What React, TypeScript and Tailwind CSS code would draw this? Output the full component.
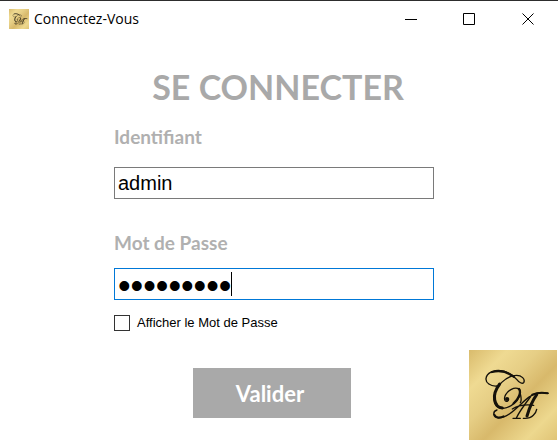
import { useState } from "react";

function Monogram({ className, id }: { className: string; id: string }) {
  return (
    <svg viewBox="0 0 264 270" preserveAspectRatio="none" className={className} role="img" aria-label="CA">
      <defs>
        <linearGradient id={id} x1="0" y1="0" x2="1" y2="1">
          <stop offset="0" stopColor="#d9bb6c" />
          <stop offset="0.22" stopColor="#efda92" />
          <stop offset="0.4" stopColor="#e6ce85" />
          <stop offset="0.58" stopColor="#d8b96b" />
          <stop offset="0.82" stopColor="#edd88e" />
          <stop offset="1" stopColor="#e0c476" />
        </linearGradient>
      </defs>
      <rect width="264" height="270" fill={`url(#${id})`} />
      <g fill="none" stroke="#15120b" strokeLinecap="round" strokeLinejoin="round">
        <path strokeWidth="4" d="M84 108C64 110 50 98 51 86C53 68 74 60 95 62C116 64 132 76 143 88C150 97 160 103 164 98C170 87 157 76 143 76C112 76 77 110 75 143C73 164 85 176 103 175C130 173 154 145 154 126C154 114 140 111 127 118C112 126 103 141 108 151C112 158 121 153 118 145" />
        <path strokeWidth="9" d="M92 102C80 118 74 133 77 149C80 165 88 173 100 174" />
        <path strokeWidth="7" d="M69 66C92 59 114 65 134 80M150 117C158 127 148 149 134 160" />
        <circle cx="114" cy="147" r="6" fill="#15120b" stroke="none" />
        <path strokeWidth="4" d="M84 180C70 184 71 204 89 204C122 204 155 158 182 140C200 127 217 126 237 130M130 177C148 166 172 163 194 166" />
        <path strokeWidth="6" d="M76 194C80 204 92 205 104 199M190 134C208 126 222 127 236 130" />
        <path strokeWidth="9" d="M203 134C189 154 180 177 174 198" />
        <path strokeWidth="4" d="M163 205C175 206 186 203 193 196C199 190 202 184 203 178M132 205L154 205M154 132C157 145 159 151 154 158M184 141C168 162 152 183 142 204" />
      </g>
    </svg>
  );
}

export default function App() {
  const [login, setLogin] = useState("admin");
  const [password, setPassword] = useState("motpasse1");
  const [visible, setVisible] = useState(false);

  return (
    <div className="relative min-h-screen border-t border-[#2d2d2d] bg-white font-['Lato',sans-serif]">
      <header className="flex h-9 items-center pl-[9px]">
        <Monogram id="gold-small" className="size-5" />
        <h1 className="ml-[5px] grow font-['Open_Sans',sans-serif] text-sm text-black">Connectez-Vous</h1>
        <button type="button" aria-label="Réduire" className="flex h-9 w-[58px] items-center justify-center">
          <svg className="size-3" viewBox="0 0 12 12" shapeRendering="crispEdges"><path d="M0 6.5H12" stroke="black" /></svg>
        </button>
        <button type="button" aria-label="Agrandir" className="flex h-9 w-[58px] items-center justify-center">
          <svg className="size-3" viewBox="0 0 12 12" fill="none"><path d="M.5.5H11.5V11.5H.5Z" stroke="black" /></svg>
        </button>
        <button type="button" aria-label="Fermer" className="flex h-9 w-[60px] items-center justify-center">
          <svg className="size-3" viewBox="0 0 12 12"><path d="M.5.5L11.5 11.5M11.5.5L.5 11.5" stroke="black" /></svg>
        </button>
      </header>

      <main className="pr-2.5">
        <form className="mx-auto flex w-80 flex-col pt-[30px]" onSubmit={(e) => e.preventDefault()}>
          <h2 className="pl-2 text-center text-[34px] leading-10 font-bold whitespace-nowrap text-[#a9a9a9]">SE CONNECTER</h2>
          <label htmlFor="login" className="mt-4 text-[19px] leading-7 font-bold text-[#b0b0b0]">Identifiant</label>
          <input
            id="login"
            value={login}
            onChange={(e) => setLogin(e.target.value)}
            className="mt-4 h-8 border border-[#7a7a7a] bg-white px-[3px] font-['Liberation_Sans',sans-serif] text-xl text-black outline-none"
          />
          <label htmlFor="password" className="mt-[30px] text-[19px] leading-7 font-bold text-[#b0b0b0]">Mot de Passe</label>
          <div className="relative mt-[11px]">
            <input
              id="password"
              type={visible ? "text" : "password"}
              value={password}
              onChange={(e) => setPassword(e.target.value)}
              className={
                visible
                  ? "block h-8 w-full border border-[#0078d7] bg-white px-[3px] font-['Liberation_Sans',sans-serif] text-xl text-black outline-none"
                  : "block h-8 w-full border border-[#0078d7] bg-white px-[3px] pt-[3px] font-['Liberation_Sans',sans-serif] text-4xl text-black caret-transparent outline-none"
              }
            />
            {!visible && <span className="absolute top-1 left-[117px] h-6 w-px bg-black" />}
          </div>
          <label className="mt-[13px] flex items-center gap-[7px] font-['Liberation_Sans',sans-serif] text-[13px] leading-5 text-black">
            <input
              type="checkbox"
              checked={visible}
              onChange={(e) => setVisible(e.target.checked)}
              className="size-4 appearance-none border border-[#333333] bg-white checked:bg-[#333333]"
            />
            Afficher le Mot de Passe
          </label>
          <button type="submit" className="mt-[35px] mr-1 h-[50px] w-[158px] self-center bg-[#a9a9a9] pr-1 text-[22px] font-bold text-white">Valider</button>
        </form>
      </main>

      <Monogram id="gold-large" className="absolute right-px bottom-[3px] h-[90px] w-[88px]" />
    </div>
  );
}
